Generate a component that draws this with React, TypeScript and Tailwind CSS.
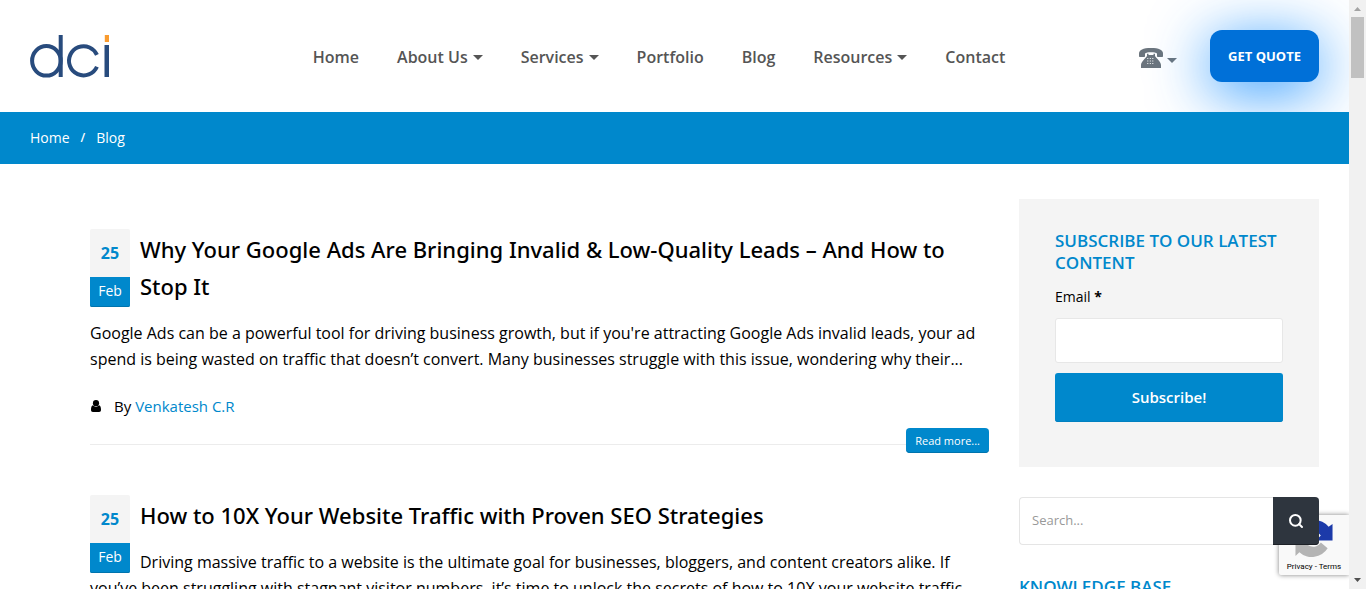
import type { ReactNode } from "react";
import { Search } from "lucide-react";

const navItems = [
  { label: "Home" },
  { label: "About Us", menu: true },
  { label: "Services", menu: true },
  { label: "Portfolio" },
  { label: "Blog" },
  { label: "Resources", menu: true },
  { label: "Contact" },
];

function Caret() {
  return (
    <svg viewBox="0 0 10 5" className="h-[5px] w-[10px]" fill="currentColor" aria-hidden="true">
      <path d="M0 0h10L5 5z" />
    </svg>
  );
}

function Logo() {
  return (
    <svg viewBox="0 0 80 44" className="h-11 w-20" role="img" aria-label="dci">
      <g fill="none" stroke="#284b7d" strokeWidth="4">
        <ellipse cx="16.4" cy="25.8" rx="14.3" ry="14.8" />
        <circle
          cx="53.6"
          cy="25.8"
          r="14.6"
          pathLength="360"
          strokeDasharray="312 48"
          transform="rotate(24 53.6 25.8)"
        />
      </g>
      <rect x="28.7" y="0" width="4" height="42" fill="#284b7d" />
      <rect x="74.5" y="10" width="4.5" height="32" fill="#284b7d" />
      <rect x="74.8" y="0" width="4.2" height="7" fill="#f99b2f" />
    </svg>
  );
}

function Telephone() {
  return (
    <svg viewBox="0 0 24 20" className="h-5 w-6" fill="#6c757d" aria-hidden="true">
      <path d="M0 8V5.500C0 2 4 0 12 0s12 2 12 5.500V8c0 .6-.4 1-1 1h-4c-.6 0-1-.4-1-1V5.500C17 4.600 15 4.200 12 4.200s-5 .4-6 1.300V8c0 .6-.4 1-1 1H1c-.6 0-1-.4-1-1z" />
      <path d="M8 5.800h1.500V7h5V5.800H16V8c1 2 6 5.500 6 9v3H2v-3c0-3.500 5-7 6-9z" />
      <g stroke="#fff" strokeWidth="1" strokeDasharray="1 1.500">
        <path d="M8.300 10.500h7.500M8.300 13h7.500M8.300 15.500h7.500" />
      </g>
    </svg>
  );
}

function Person() {
  return (
    <svg viewBox="0 0 12 12" className="size-3" fill="currentColor" aria-hidden="true">
      <circle cx="6" cy="3.200" r="3.100" />
      <path d="M3 5.200C1.500 5.400 1 7.500 1 9.800 1 11.200 1.700 12 2.900 12h6.200c1.200 0 1.900-.8 1.900-2.200 0-2.300-.5-4.400-2-4.600-.8.900-1.800 1.500-3 1.500s-2.200-.6-3-1.500z" />
    </svg>
  );
}

function DateBadge({ day, month }: { day: string; month: string }) {
  return (
    <div className="float-left mr-[10px] w-10 text-center">
      <span className="block rounded-t-xs bg-[#f4f4f4] text-base leading-[48px] font-bold text-[#0088cc]">
        {day}
      </span>
      <span className="block h-[30px] rounded-b-xs bg-[#0088cc] text-sm leading-7 text-white shadow-[inset_0_-1px_0_#0074ad]">
        {month}
      </span>
    </div>
  );
}

function Post({ title, author, children }: { title: string; author: string; children: ReactNode }) {
  return (
    <article className="mb-[42px]">
      <DateBadge day="25" month="Feb" />
      <h2 className="mb-[15px] pt-[2px] font-['Noto_Sans',sans-serif] text-[22px] leading-[37px] font-medium">
        <a href="#">{title}</a>
      </h2>
      <p className="text-base leading-[26px]">{children}</p>
      <p className="mt-5 flex items-center gap-3 text-[15px] leading-7">
        <Person />
        <span>
          By{" "}
          <a href="#" className="text-[#0088cc]">
            {author}
          </a>
        </span>
      </p>
      <div className="mt-2 flex items-end">
        <div className="mb-2 flex-1 border-b border-[#ececec]" />
        <a
          href="#"
          className="rounded bg-[#0088cc] px-[9px] text-[11px] leading-[25px] font-medium text-white shadow-[inset_0_-1px_0_#0074ad]"
        >
          Read more...
        </a>
      </div>
    </article>
  );
}

function Scrollbar() {
  return (
    <div className="flex w-[17px] shrink-0 flex-col items-center bg-[#f1f1f1]" aria-hidden="true">
      <svg viewBox="0 0 17 17" className="size-[17px]" fill="#a3a3a3">
        <path d="M5 11h7L8.500 7z" />
      </svg>
      <div className="h-[61px] w-[13px] bg-[#c1c1c1]" />
      <svg viewBox="0 0 17 17" className="mt-auto size-[17px]" fill="#505050">
        <path d="M5 6h7l-3.500 4z" />
      </svg>
    </div>
  );
}

function RecaptchaBadge() {
  return (
    <div className="absolute right-0 bottom-[14px] flex h-[60px] w-[70px] flex-col items-center rounded-l-xs bg-[#f9f9f9] shadow-[0_0_5px_gray]">
      <svg viewBox="0 0 40 40" className="mt-1 h-10 w-10" aria-hidden="true">
        <path d="M20 1a19 19 0 0 1 15 7l4-3v17H22l5-5a9 9 0 0 0-7-4z" fill="#1c3aa9" />
        <path d="M20 1A19 19 0 0 0 2 15l9 5a9 9 0 0 1 9-9z" fill="#4285f4" />
        <path d="M1 20v18l4-4a19 19 0 0 0 29-4l-7-6a9 9 0 0 1-14 2l5-6z" fill="#b4b4b4" />
      </svg>
      <p className="pt-px font-[Roboto,sans-serif] text-[8px] leading-4 whitespace-nowrap text-black">
        <a href="#">Privacy</a> - <a href="#">Terms</a>
      </p>
    </div>
  );
}

export default function App() {
  return (
    <div className="flex h-screen overflow-hidden bg-white font-['Open_Sans',sans-serif] text-black">
      <div className="relative min-w-0 flex-1 overflow-hidden">
        <header className="flex h-28 items-center px-[30px]">
          <a href="#" className="pt-[2px]">
            <Logo />
          </a>
          <nav className="flex flex-1 justify-center gap-[38px] pt-[2px] pl-[69px] text-base font-semibold text-[#555]">
            {navItems.map((item) => (
              <a key={item.label} href="#" className="flex items-center gap-[5px] leading-6">
                {item.label}
                {item.menu && <Caret />}
              </a>
            ))}
          </nav>
          <button
            type="button"
            aria-label="Call us"
            className="mr-[33px] flex items-center gap-1 pt-1 text-[#6c757d]"
          >
            <Telephone />
            <span className="pt-1">
              <Caret />
            </span>
          </button>
          <a
            href="#"
            className="rounded-xl bg-[#0070d8] px-[18px] text-[13px] leading-[52px] font-bold text-white shadow-[0_10px_60px_#0084ffd9]"
          >
            GET QUOTE
          </a>
        </header>

        <nav
          aria-label="Breadcrumb"
          className="relative flex h-[52px] items-center bg-[#0088cc] px-[30px] text-sm text-white"
        >
          <a href="#">Home</a>
          <span className="px-[11px] text-xs font-semibold">/</span>
          <span>Blog</span>
        </nav>

        <div className="flex gap-[30px] pr-[30px] pl-[90px]">
          <main className="min-w-0 flex-1 pt-[65px]">
            <Post
              title="Why Your Google Ads Are Bringing Invalid & Low-Quality Leads – And How to Stop It"
              author="Venkatesh C.R"
            >
              Google Ads can be a powerful tool for driving business growth, but if you're attracting Google Ads
              invalid leads, your ad spend is being wasted on traffic that doesn’t convert. Many businesses struggle
              with this issue, wondering why their...
            </Post>
            <Post title="How to 10X Your Website Traffic with Proven SEO Strategies" author="Venkatesh C.R">
              Driving massive traffic to a website is the ultimate goal for businesses, bloggers, and content creators
              alike. If you’ve been struggling with stagnant visitor numbers, it’s time to unlock the secrets of how to
              10X your website traffic
            </Post>
          </main>

          <aside className="w-[300px] shrink-0 pt-[35px]">
            <form className="bg-[#f4f4f4] px-9 pt-[31px] pb-[45px]">
              <h3 className="text-[17px] leading-[22px] font-semibold text-[#0088cc]">
                SUBSCRIBE TO OUR LATEST CONTENT
              </h3>
              <label htmlFor="email" className="mt-[9px] block text-sm leading-7">
                Email <span className="font-bold">*</span>
              </label>
              <input
                id="email"
                type="email"
                className="mt-[7px] block h-[45px] w-full rounded-[3px] border border-[#e7e7e7] bg-white px-3 text-sm"
              />
              <button
                type="button"
                className="mt-[10px] block h-[49px] w-full rounded-[3px] bg-[#0088cc] text-[15px] font-semibold text-white shadow-[inset_0_-1px_0_#0080c0]"
              >
                Subscribe!
              </button>
            </form>

            <form role="search" className="mt-[30px] flex h-12">
              <input
                type="search"
                aria-label="Search"
                placeholder="Search..."
                className="min-w-0 flex-1 rounded-l border border-r-0 border-[#e5e5e5] bg-white px-3 text-[13px] placeholder:text-[#999]"
              />
              <button
                type="button"
                aria-label="Search"
                className="relative z-10 flex w-[46px] items-center justify-center rounded-r bg-[#2e353e] text-white shadow-[inset_0_-1px_0_#1d2127]"
              >
                <Search className="size-4" strokeWidth={3} />
              </button>
            </form>

            <h3 className="mt-[31px] text-[17px] leading-[22px] font-semibold text-[#0088cc]">KNOWLEDGE BASE</h3>
          </aside>
        </div>

        <RecaptchaBadge />
      </div>
      <Scrollbar />
    </div>
  );
}
